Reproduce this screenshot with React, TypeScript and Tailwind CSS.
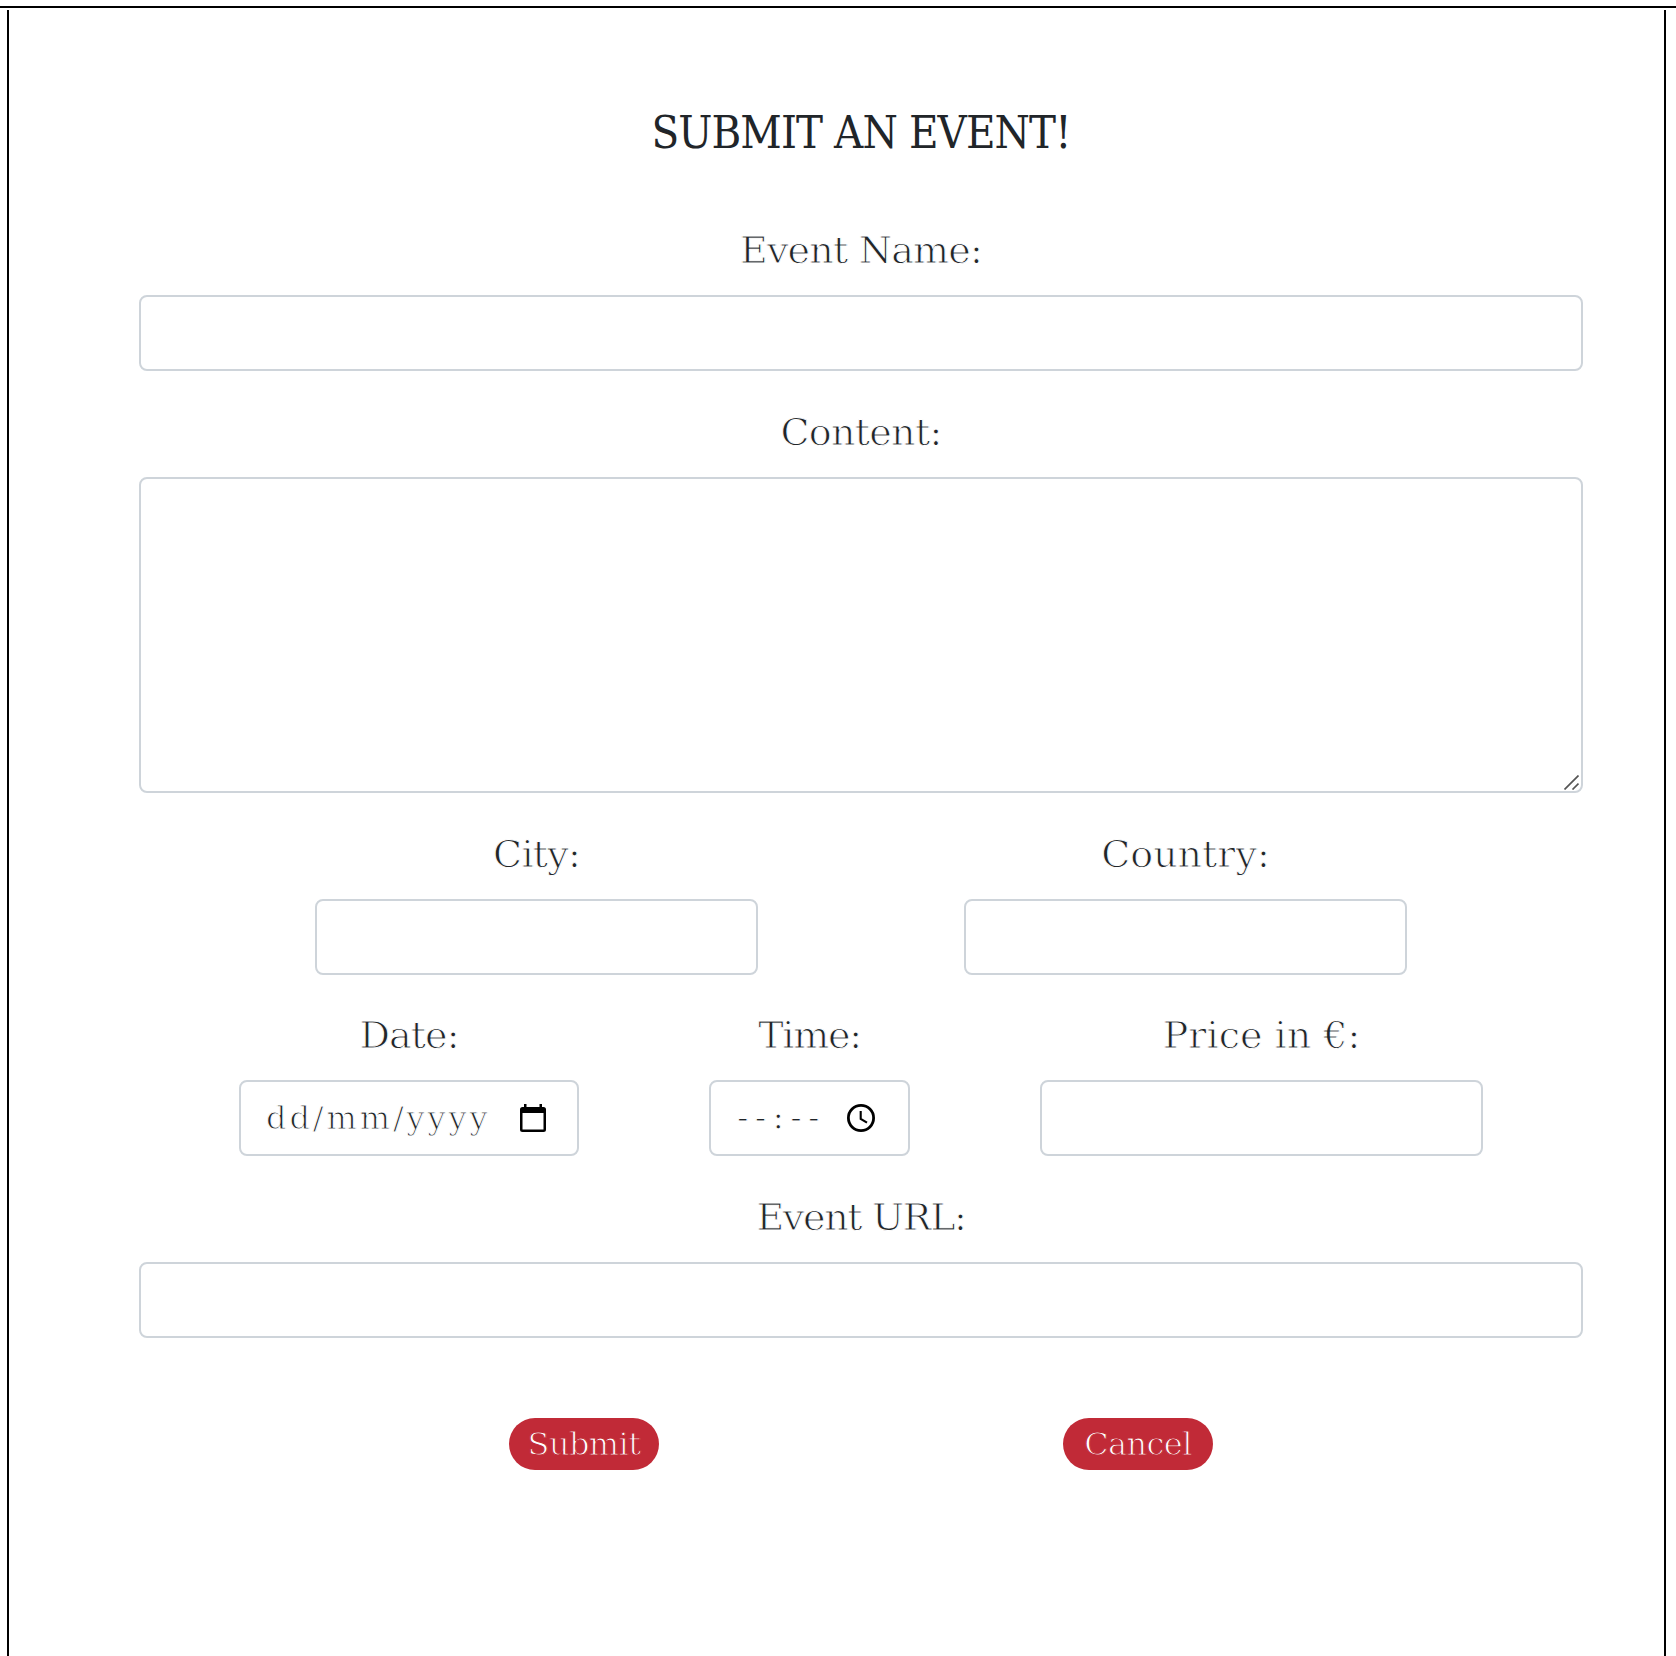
import type { ReactNode } from "react";

const control =
  "block h-[76px] rounded-lg border-2 border-[#ced4da] bg-white outline-none";

function Label({ children, tracking = "tracking-[-0.8px]" }: { children: ReactNode; tracking?: string }) {
  return (
    <label
      className={`flex h-[60px] items-center justify-center whitespace-nowrap pb-[2px] text-[38px] leading-[58px] text-[#212529] [-webkit-text-stroke:0.95px_#fff] ${tracking}`}
    >
      {children}
    </label>
  );
}

function Field({ label, tracking, className, children }: { label: string; tracking?: string; className?: string; children: ReactNode }) {
  return (
    <div className={`flex flex-col gap-[14px] ${className ?? ""}`}>
      <Label tracking={tracking}>{label}</Label>
      {children}
    </div>
  );
}

function CalendarIcon() {
  return (
    <svg width="26" height="28" viewBox="0 0 26 28" fill="none">
      <path
        fillRule="evenodd"
        d="M4 0h2.500v3h13V0H22v3h1.500A2.500 2.500 0 0 1 26 5.500v20a2.500 2.500 0 0 1-2.500 2.500h-21A2.500 2.500 0 0 1 0 25.500v-20A2.500 2.500 0 0 1 2.500 3H4zM2.500 9v16.500h21V9z"
        fill="#000"
      />
    </svg>
  );
}

function ClockIcon() {
  return (
    <svg width="28" height="28" viewBox="0 0 28 28" fill="none" stroke="#000">
      <circle cx="14" cy="14" r="12.600" strokeWidth="2.800" />
      <path d="M13.700 7v7.800l6.300 3.800" strokeWidth="2.100" />
    </svg>
  );
}

export default function App() {
  return (
    <div className="flex h-[1656px] w-[1676px] flex-col overflow-hidden bg-white pt-[6px] font-['DejaVu_Serif',serif]">
      <div className="mb-[2px] h-[2px] w-full shrink-0 bg-black" />
      <main className="ml-[7px] flex w-[1659px] grow flex-col border-x-2 border-black pl-[130px] pr-[81px]">
        <h1 className="mt-[90px] h-[66px] whitespace-nowrap text-center font-['DejaVu_Serif_Condensed','DejaVu_Serif',serif] text-[45px] leading-[66px] tracking-[-0.9px] text-[#212529] [font-stretch:condensed]">
          SUBMIT AN EVENT!
        </h1>
        <form className="mt-[55px] flex flex-col gap-[32px]" onSubmit={(e) => e.preventDefault()}>
          <Field label="Event Name:">
            <input className={`${control} w-full`} />
          </Field>
          <Field label="Content:" tracking="tracking-[-0.7px]">
            <div className="relative">
              <textarea className="block h-[316px] w-full resize-none rounded-lg border-2 border-[#ced4da] bg-white outline-none" />
              <svg className="absolute bottom-[3px] right-[4px]" width="15" height="15" viewBox="0 0 15 15" stroke="#555" strokeWidth="1.700">
                <path d="M0.500 14.500l14-14M8.500 14.500l6-6" />
              </svg>
            </div>
          </Field>
          <div className="flex gap-[206px] pl-[176px]">
            <Field label="City:" className="w-[443px]">
              <input className={`${control} w-full`} />
            </Field>
            <Field label="Country:" tracking="tracking-[0px]" className="w-[443px]">
              <input className={`${control} w-full`} />
            </Field>
          </div>
          <div className="-mt-px flex gap-[130px] pl-[100px]">
            <Field label="Date:" tracking="tracking-[-0.900px]" className="w-[340px]">
              <div className={`${control} flex w-full items-center justify-between pl-[25px] pr-[31px]`}>
                <span className="text-[32px] leading-[44px] tracking-[2.900px] text-[#212529] [-webkit-text-stroke:1px_#fff]">dd/mm/yyyy</span>
                <CalendarIcon />
              </div>
            </Field>
            <Field label="Time:" tracking="tracking-[-1.300px]" className="w-[201px]">
              <div className={`${control} flex w-full items-center justify-between pl-[26px] pr-[33px]`}>
                <span className="whitespace-nowrap pb-[3px] text-[34px] leading-[44px] tracking-[6.300px] text-[#212529] [-webkit-text-stroke:1px_#fff]">--:--</span>
                <ClockIcon />
              </div>
            </Field>
            <Field label="Price in €:" tracking="tracking-[0px]" className="w-[443px]">
              <input className={`${control} w-full`} />
            </Field>
          </div>
          <Field label="Event URL:" tracking="tracking-[-1.300px]">
            <input className={`${control} w-full`} />
          </Field>
          <div className="mt-[48px] flex gap-[404px] pl-[370px] text-[32px] leading-[51px] tracking-[-0.600px] text-white [-webkit-text-stroke:1px_#c12a37]">
            <button type="submit" className="h-[52px] w-[150px] rounded-full bg-[#c12a37]">Submit</button>
            <button type="button" className="h-[52px] w-[150px] rounded-full bg-[#c12a37]">Cancel</button>
          </div>
        </form>
      </main>
    </div>
  );
}
